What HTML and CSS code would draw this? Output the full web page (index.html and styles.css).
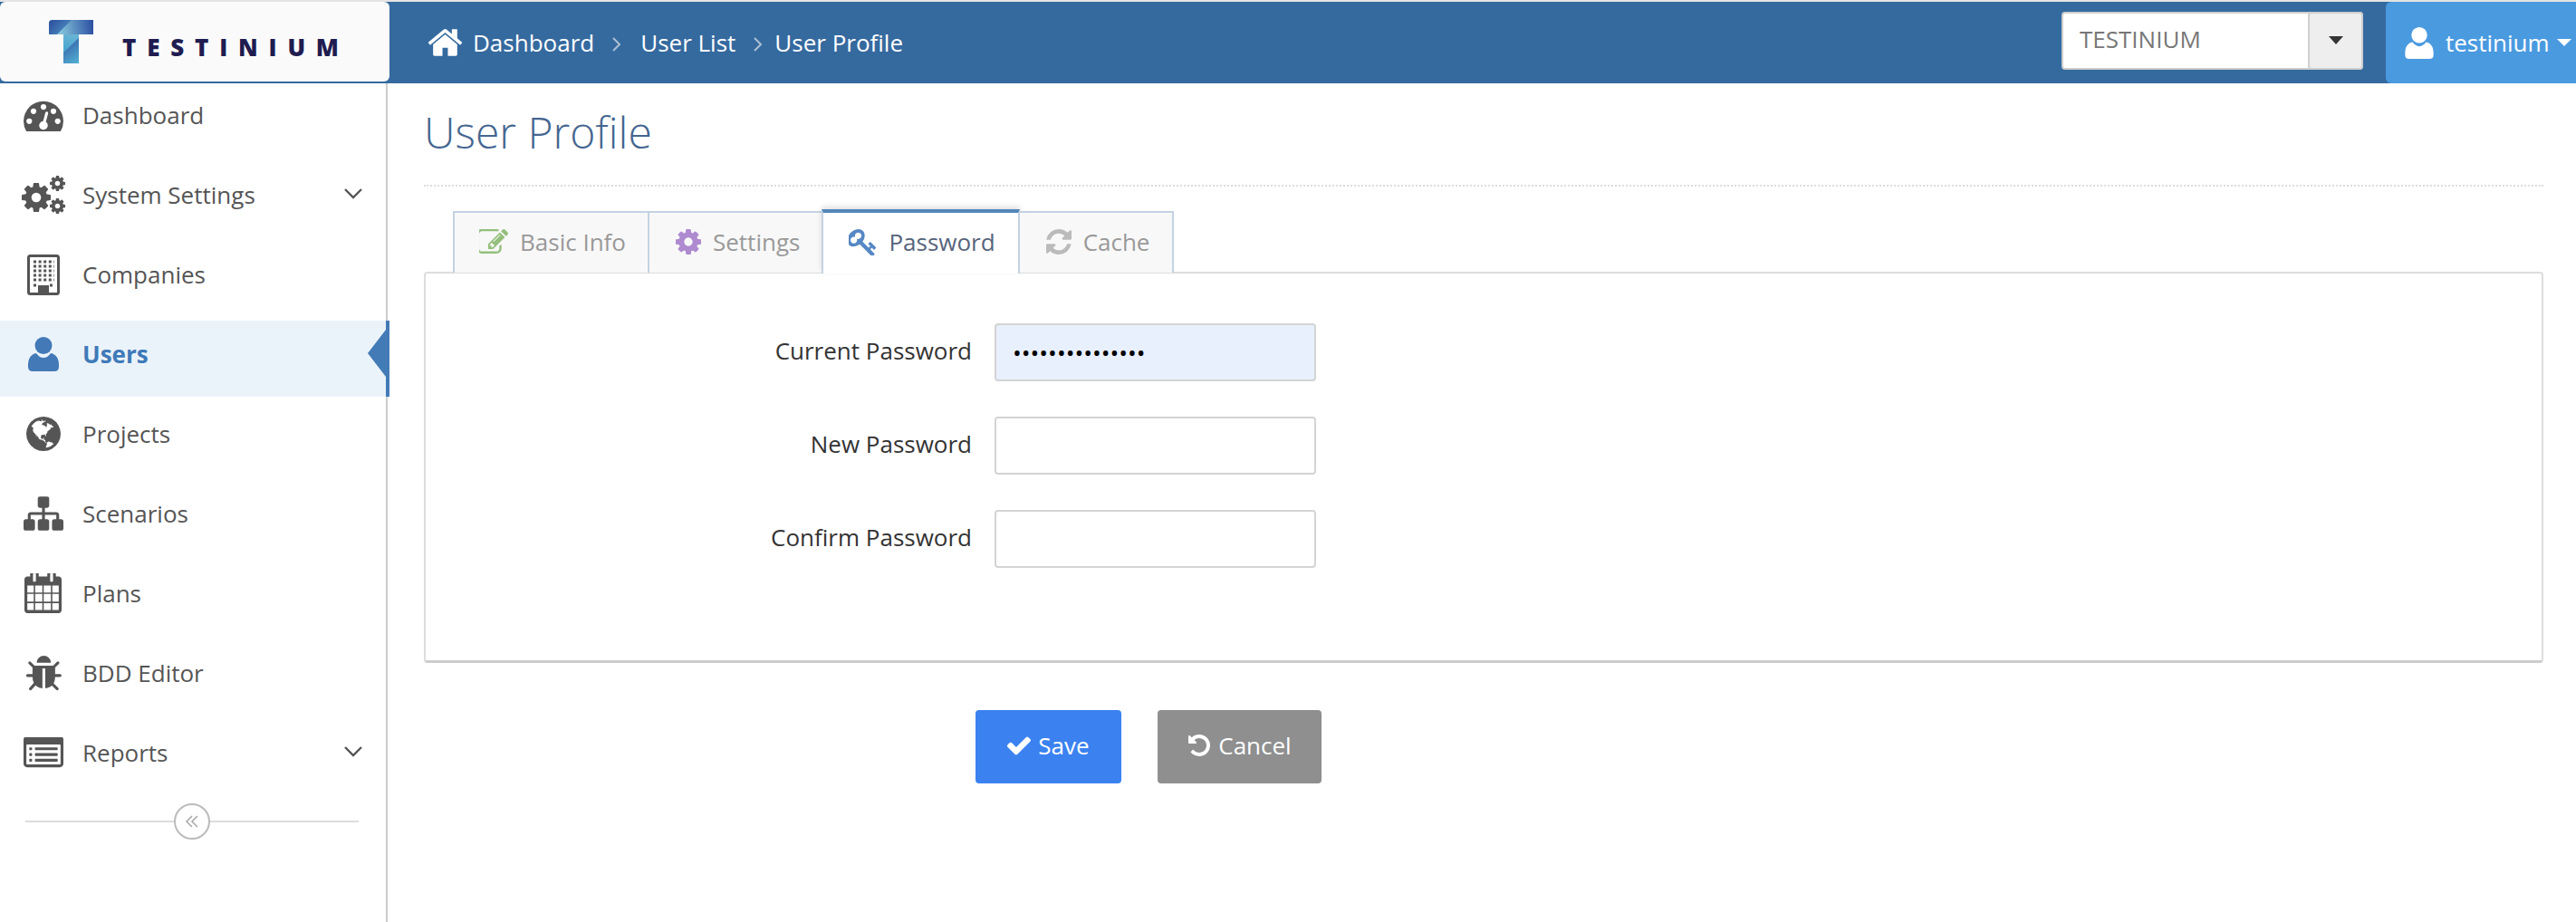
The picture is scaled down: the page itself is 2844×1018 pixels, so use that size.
FILE: index.html
```html
<!DOCTYPE html>
<html lang="en">
<head>
<meta charset="utf-8">
<title>User Profile</title>
<link rel="stylesheet" href="styles.css">
</head>
<body>
<svg class="defs" width="0" height="0" aria-hidden="true">
  <defs>
    <symbol id="i-cog" viewBox="128 128 1536 1536"><path d="M1152 896q0-106-75-181t-181-75-181 75-75 181 75 181 181 75 181-75 75-181zm512-109v222q0 12-8 23t-20 13l-185 28q-19 54-39 91 35 50 107 138 10 12 10 25t-9 23q-27 37-99 108t-94 71q-12 0-26-9l-138-108q-44 23-91 38-16 136-29 186-7 28-36 28h-222q-14 0-24.5-8.5t-11.5-21.5l-28-184q-49-16-90-37l-141 107q-10 9-25 9-14 0-25-11-126-114-165-168-7-10-7-23 0-12 8-23 15-21 51-66.5t54-70.5q-27-50-41-99l-183-27q-13-2-21-12.5t-8-23.5v-222q0-12 8-23t19-13l186-28q14-46 39-92-40-57-107-138-10-12-10-24 0-10 9-23 26-36 98.5-107.5t94.5-71.5q13 0 26 10l138 107q44-23 91-38 16-136 29-186 7-28 36-28h222q14 0 24.5 8.5t11.5 21.5l28 184q49 16 90 37l142-107q9-9 24-9 13 0 25 10 129 119 165 170 7 8 7 22 0 12-8 23-15 21-51 66.5t-54 70.5q26 50 41 98l183 28q13 2 21 12.5t8 23.5z"/></symbol>
    <symbol id="i-user" viewBox="0 0 34 38"><circle cx="17" cy="9.5" r="9.5"/><path d="M0 31C0 24 3 19 9 18C11 21 14 23 17 23C20 23 23 21 25 18C31 19 34 24 34 31V33Q34 38 29 38H5Q0 38 0 33Z"/></symbol>
    <linearGradient id="lg-a" x1="0" y1="0" x2="1" y2="0.6"><stop offset="0" stop-color="#2b4b9b"/><stop offset="1" stop-color="#4c8fc2"/></linearGradient>
    <linearGradient id="lg-b" gradientUnits="userSpaceOnUse" x1="12" y1="10" x2="48" y2="4"><stop offset="0" stop-color="#83c3da"/><stop offset="1" stop-color="#2e52a3"/></linearGradient>
    <linearGradient id="lg-b2" gradientUnits="userSpaceOnUse" x1="24" y1="12" x2="20" y2="32"><stop offset="0" stop-color="#6fb6d6"/><stop offset="1" stop-color="#4aa8cf"/></linearGradient>
    <linearGradient id="lg-c" gradientUnits="userSpaceOnUse" x1="18" y1="26" x2="34" y2="48"><stop offset="0" stop-color="#3967ab"/><stop offset="1" stop-color="#53b4d6"/></linearGradient>
    <clipPath id="t-clip"><path d="M0 4Q0 0 4 0H49V16H33V48H16V16H0Z"/></clipPath>
  </defs>
</svg>
<div class="app">
  <header class="topbar">
    <div class="brand">
      <svg class="brand-mark" viewBox="0 0 49 48" width="49" height="48" aria-hidden="true">
        <g clip-path="url(#t-clip)">
          <rect width="49" height="48" fill="url(#lg-b)"/>
          <polygon points="9,16 33,16 33,20 16,36 16,16" fill="url(#lg-b2)"/>
          <polygon points="0,0 25,0 9,16 0,16" fill="url(#lg-a)"/>
          <polygon points="33,20 33,48 16,48 16,36" fill="url(#lg-c)"/>
        </g>
      </svg>
      <span class="brand-name">TESTINIUM</span>
    </div>
    <nav class="crumbs">
      <svg class="crumb-home" viewBox="97 262 1600 1274" aria-hidden="true"><path d="M1472 992v480q0 26-19 45t-45 19h-384v-384h-256v384h-384q-26 0-45-19t-19-45v-480q0-1 .5-3t.5-3l575-474 575 474q1 2 1 6zm223-69l-62 74q-8 9-21 11h-3q-13 0-21-7l-692-577-692 577q-12 8-24 7-13-2-21-11l-62-74q-8-10-7-23.5t11-21.5l719-599q32-26 76-26t76 26l244 204v-195q0-14 9-23t23-9h192q14 0 23 9t9 23v408l219 182q10 8 11 21.5t-7 23.5z"/></svg>
      <a class="crumb">Dashboard</a>
      <svg class="crumb-sep" viewBox="0 0 11 16" aria-hidden="true"><path d="M2 1l7 7-7 7"/></svg>
      <a class="crumb">User List</a>
      <svg class="crumb-sep crumb-sep-tight" viewBox="0 0 11 16" aria-hidden="true"><path d="M2 1l7 7-7 7"/></svg>
      <a class="crumb">User Profile</a>
    </nav>
    <div class="company-select">
      <span class="company-value">TESTINIUM</span>
      <span class="company-btn"><i class="caret caret-dark"></i></span>
    </div>
    <div class="user-menu">
      <svg class="user-icon" aria-hidden="true"><use href="#i-user"/></svg>
      <span>testinium</span>
      <i class="caret caret-light"></i>
    </div>
  </header>

  <div class="layout">
    <aside class="sidebar">
      <ul class="menu">
        <li class="menu-item">
          <span class="menu-icon"><svg width="44" height="35" viewBox="0 192 1792 1408"><path d="M384 1152q0-53-37.5-90.5t-90.5-37.5-90.5 37.5-37.5 90.5 37.5 90.5 90.5 37.5 90.5-37.5 37.5-90.5zm192-448q0-53-37.5-90.5t-90.5-37.5-90.5 37.5-37.5 90.5 37.5 90.5 90.5 37.5 90.5-37.5 37.5-90.5zm428 481l101-382q6-26-7.5-48.5t-38.5-29.5-48 6.5-30 39.5l-101 382q-60 5-107 43.5t-63 98.5q-20 77 20 146t117 89 146-20 89-117q16-60-6-117t-72-91zm660-33q0-53-37.5-90.5t-90.5-37.5-90.5 37.5-37.5 90.5 37.5 90.5 90.5 37.5 90.5-37.5 37.5-90.5zm-640-640q0-53-37.5-90.5t-90.5-37.5-90.5 37.5-37.5 90.5 37.5 90.5 90.5 37.5 90.5-37.5 37.5-90.5zm448 192q0-53-37.5-90.5t-90.5-37.5-90.5 37.5-37.5 90.5 37.5 90.5 90.5 37.5 90.5-37.5 37.5-90.5zm320 448q0 261-141 483-19 29-54 29h-1402q-35 0-54-29-141-221-141-483 0-182 71-348t191-286 286-191 348-71 348 71 286 191 191 286 71 348z"/></svg></span>
          <span>Dashboard</span>
        </li>
        <li class="menu-item">
          <span class="menu-icon"><svg width="48" height="42" viewBox="0 0 48 42"><use href="#i-cog" x="0" y="8" width="32" height="32"/><use href="#i-cog" x="31" y="0" width="17" height="17"/><use href="#i-cog" x="31" y="25" width="17" height="17"/></svg></span>
          <span>System Settings</span>
          <svg class="chevron" viewBox="0 0 20 12" aria-hidden="true"><path d="M1 1l9 9 9-9"/></svg>
        </li>
        <li class="menu-item">
          <span class="menu-icon"><svg width="36" height="45" viewBox="0 0 36 45"><rect x="1.5" y="1.5" width="33" height="42" rx="2" class="building-frame"/><path d="M7 8H30M7 13H30M7 18H30M7 23H30M7 28H30" class="building-dots"/><path d="M7 34H11M25 34H30" class="building-dots"/><rect x="12" y="34" width="12" height="9"/></svg></span>
          <span>Companies</span>
        </li>
        <li class="menu-item is-active">
          <span class="menu-icon"><svg width="34" height="38"><use href="#i-user"/></svg></span>
          <span>Users</span>
          <i class="active-arrow"></i>
        </li>
        <li class="menu-item">
          <span class="menu-icon"><svg width="38" height="38" viewBox="128 128 1536 1536"><path d="M896 128q209 0 385.5 103t279.5 279.5 103 385.5-103 385.5-279.5 279.5-385.5 103-385.5-103-279.5-279.5-103-385.5 103-385.5 279.5-279.5 385.5-103zm274 521q-2 1-9.5 9.5t-13.5 9.5q2 0 4.5-5t5-11 3.5-7q6-7 22-15 14-6 52-12 34-8 51 11-2-2 9.5-13t14.5-12q3-2 15-4.5t15-7.5l2-22q-12 1-17.5-7t-6.5-21q0 2-6 8 0-7-4.5-8t-11.5 1-9 1q-10-3-15-7.5t-8-16.5-4-15q-2-5-9.5-11t-9.5-10q-1-2-2.5-5.5t-3-6.5-4-5.5-5.5-2.5-7 5-7.5 10-4.5 5q-3-2-6-1.5t-4.5 1-4.5 3-5 3.5q-3 2-8.5 3t-8.5 2q15-5-1-11-10-4-16-3 9-4 7.5-12t-8.5-14h5q-1-4-8.5-8.5t-17.5-8.5-13-6q-8-5-34-9.5t-33-.5q-5 6-4.5 10.5t4 14 3.5 12.5q1 6-5.5 13t-6.5 12q0 7 14 15.5t10 21.5q-3 8-16 16t-16 12q-5 8-1.5 18.5t10.5 16.5q2 2 1.5 4t-3.5 4.5-5.5 4-6.5 3.5l-3 2q-11 5-20.5-6t-13.5-26q-7-25-16-30-23-8-29 1-5-13-41-26-25-9-58-4 6-1 0-15-7-15-19-12 3-6 4-17.5t1-13.5q3-13 12-23 1-1 7-8.5t9.5-13.5.5-6q35 4 50-11 5-5 11.5-17t10.5-17q9-6 14-5.5t14.5 5.5 14.5 5q14 1 15.5-11t-7.5-20q12 1 3-17-4-7-8-9-12-4-27 5-8 4 2 8-1-1-9.5 10.5t-16.5 17.5-14-13q-1-1-5.5-13.5t-9.5-13.5q-8 0-16 15 3-8-11-15t-24-8q19-12-8-27-7-4-20.5-5t-19.5 4q-5 7-5.5 11.5t5 8 10.5 5.5 11.5 4 8.5 3q14 10 8 14-2 1-8.5 3.5t-11.5 4.5-6 4q-3 4 0 14t-2 14q-5-5-9-17.5t-7-16.5q7 9-25 6l-10-1q-4 0-16 2t-20.5 1-13.5-8q-4-8 0-20 1-4 4-2-4-3-11-9.5t-10-8.5q-46 15-94 41 6 1 12-1 5-2 13-6.5t10-5.5q34-14 42-7l5-5q14 16 20 25-7-4-30-1-20 6-22 12 7 12 5 18-4-3-11.5-10t-14.5-11-15-5q-16 0-22 1-146 80-235 222 7 7 12 8 4 1 5 9t2.5 11 11.5-3q9 8 3 19 1-1 44 27 19 17 21 21 3 11-10 18-1-2-9-9t-9-4q-3 5 .5 18.5t10.5 12.5q-7 0-9.5 16t-2.5 35.5-1 23.5l2 1q-3 12 5.5 34.5t21.5 19.5q-13 3 20 43 6 8 8 9 3 2 12 7.5t15 10 10 10.5q4 5 10 22.5t14 23.5q-2 6 9.5 20t10.5 23q-1 0-2.5 1t-2.5 1q3 7 15.5 14t15.5 13q1 3 2 10t3 11 8 2q2-20-24-62-15-25-17-29-3-5-5.5-15.5t-4.5-14.5q2 0 6 1.5t8.5 3.5 7.5 4 2 3q-3 7 2 17.5t12 18.5 17 19 12 13q6 6 14 19.5t0 13.5q9 0 20 10.5t17 19.5q5 8 8 26t5 24q2 7 8.5 13.5t12.5 9.5l16 8 13 7q5 2 18.5 10.5t21.5 11.5q10 4 16 4t14.5-2.5 13.5-3.5q15-2 29 15t21 21q36 19 55 11-2 1 .5 7.5t8 15.5 9 14.5 5.5 8.5q5 6 18 15t18 15q6-4 7-9-3 8 7 20t18 10q14-3 14-32-31 15-49-18 0-1-2.5-5.5t-4-8.5-2.5-8.5 0-7.5 5-3q9 0 10-3.5t-2-12.5-4-13q-1-8-11-20t-12-15q-5 9-16 8t-16-9q0 1-1.5 5.5t-1.5 6.5q-13 0-15-1 1-3 2.5-17.5t3.5-22.5q1-4 5.5-12t7.5-14.5 4-12.5-4.5-9.5-17.5-2.5q-19 1-26 20-1 3-3 10.5t-5 11.5-9 7q-7 3-24 2t-24-5q-13-8-22.5-29t-9.5-37q0-10 2.5-26.5t3-25-5.5-24.5q3-2 9-9.5t10-10.5q2-1 4.5-1.5t4.5 0 4-1.5 3-6q-1-1-4-3-3-3-4-3 7 3 28.5-1.5t27.5 1.5q15 11 22-2 0-1-2.5-9.5t-.5-13.5q5 27 29 9 3 3 15.5 5t17.5 5q3 2 7 5.5t5.5 4.5 5-.5 8.5-6.5q10 14 12 24 11 40 19 44 7 3 11 2t4.5-9.5 0-14-1.5-12.5l-1-8v-18l-1-8q-15-3-18.5-12t1.5-18.5 15-18.5q1-1 8-3.5t15.5-6.5 12.5-8q21-19 15-35 7 0 11-9-1 0-5-3t-7.5-5-4.5-2q9-5 2-16 5-3 7.5-11t7.5-10q9 12 21 2 8-8 1-16 5-7 20.5-10.5t18.5-9.5q7 2 8-2t1-12 3-12q4-5 15-9t13-5l17-11q3-4 0-4 18 2 31-11 10-11-6-20 3-6-3-9.5t-15-5.5q3-1 11.5-.5t10.5-1.5q15-10-7-16-17-5-43 12zm-163 877q206-36 351-189-3-3-12.5-4.5t-12.5-3.5q-18-7-24-8 1-7-2.5-13t-8-9-12.5-8-11-7q-2-2-7-6t-7-5.5-7.5-4.5-8.5-2-10 1l-3 1q-3 1-5.5 2.5t-5.5 3-4 3 0 2.5q-21-17-36-22-5-1-11-5.5t-10.5-7-10-1.5-11.5 7q-5 5-6 15t-2 13q-7-5 0-17.5t2-18.5q-3-6-10.5-4.5t-12 4.5-11.5 8.5-9 6.5-8.5 5.5-8.5 7.5q-3 4-6 12t-5 11q-2-4-11.5-6.5t-9.5-5.5q2 10 4 35t5 38q7 31-12 48-27 25-29 40-4 22 12 26 0 7-8 20.5t-7 21.5q0 6 2 16z"/></svg></span>
          <span>Projects</span>
        </li>
        <li class="menu-item">
          <span class="menu-icon"><svg width="44" height="38" viewBox="0 128 1792 1536"><path d="M1792 1248v320q0 40-28 68t-68 28h-320q-40 0-68-28t-28-68v-320q0-40 28-68t68-28h96v-192h-512v192h96q40 0 68 28t28 68v320q0 40-28 68t-68 28h-320q-40 0-68-28t-28-68v-320q0-40 28-68t68-28h96v-192h-512v192h96q40 0 68 28t28 68v320q0 40-28 68t-68 28h-320q-40 0-68-28t-28-68v-320q0-40 28-68t68-28h96v-192q0-52 38-90t90-38h512v-192h-96q-40 0-68-28t-28-68v-320q0-40 28-68t68-28h320q40 0 68 28t28 68v320q0 40-28 68t-68 28h-96v192h512q52 0 90 38t38 90v192h96q40 0 68 28t28 68z"/></svg></span>
          <span>Scenarios</span>
        </li>
        <li class="menu-item">
          <span class="menu-icon"><svg width="41" height="44" viewBox="64 128 1664 1664" preserveAspectRatio="none"><path d="M192 1664h288v-288h-288v288zm352 0h320v-288h-320v288zm-352-352h288v-320h-288v320zm352 0h320v-320h-320v320zm-352-384h288v-288h-288v288zm736 736h320v-288h-320v288zm-384-736h320v-288h-320v288zm768 736h288v-288h-288v288zm-384-352h320v-320h-320v320zm-352-864v-288q0-13-9.5-22.5t-22.5-9.5h-64q-13 0-22.5 9.5t-9.5 22.5v288q0 13 9.5 22.5t22.5 9.5h64q13 0 22.5-9.5t9.5-22.5zm736 864h288v-320h-288v320zm-384-384h320v-288h-320v288zm384 0h288v-288h-288v288zm32-480v-288q0-13-9.5-22.5t-22.5-9.5h-64q-13 0-22.5 9.5t-9.5 22.5v288q0 13 9.5 22.5t22.5 9.5h64q13 0 22.5-9.5t9.5-22.5zm384-64v1280q0 52-38 90t-90 38h-1408q-52 0-90-38t-38-90v-1280q0-52 38-90t90-38h128v-96q0-66 47-113t113-47h64q66 0 113 47t47 113v96h384v-96q0-66 47-113t113-47h64q66 0 113 47t47 113v96h128q52 0 90 38t38 90z"/></svg></span>
          <span>Plans</span>
        </li>
        <li class="menu-item">
          <span class="menu-icon"><svg width="40" height="39" viewBox="64 64 1632 1600"><path d="M1696 960q0 26-19 45t-45 19h-224q0 171-67 290l208 209q19 19 19 45t-19 45q-18 19-45 19t-45-19l-198-197q-5 5-15 13t-42 28.5-65 36.5-82 29-97 13v-896h-128v896q-51 0-101.5-13.5t-87-33-66-39-43.5-32.5l-15-14-183 207q-20 21-48 21-24 0-43-16-19-18-20.5-44.5t15.5-46.5l202-227q-58-114-58-274h-224q-26 0-45-19t-19-45 19-45 45-19h224v-294l-173-173q-19-19-19-45t19-45 45-19 45 19l173 173h844l173-173q19-19 45-19t45 19 19 45-19 45l-173 173v294h224q26 0 45 19t19 45zm-480-576h-640q0-133 93.5-226.5t226.5-93.5 226.5 93.5 93.5 226.5z"/></svg></span>
          <span>BDD Editor</span>
        </li>
        <li class="menu-item">
          <span class="menu-icon"><svg width="44" height="35" viewBox="0 192 1792 1408"><path d="M384 1184v64q0 13-9.5 22.5t-22.5 9.5h-64q-13 0-22.5-9.5t-9.5-22.5v-64q0-13 9.5-22.5t22.5-9.5h64q13 0 22.5 9.5t9.5 22.5zm0-256v64q0 13-9.5 22.5t-22.5 9.5h-64q-13 0-22.5-9.5t-9.5-22.5v-64q0-13 9.5-22.5t22.5-9.5h64q13 0 22.5 9.5t9.5 22.5zm0-256v64q0 13-9.5 22.5t-22.5 9.5h-64q-13 0-22.5-9.5t-9.5-22.5v-64q0-13 9.5-22.5t22.5-9.5h64q13 0 22.5 9.5t9.5 22.5zm1152 512v64q0 13-9.5 22.5t-22.5 9.5h-960q-13 0-22.5-9.5t-9.5-22.5v-64q0-13 9.5-22.5t22.5-9.5h960q13 0 22.5 9.5t9.5 22.5zm0-256v64q0 13-9.5 22.5t-22.5 9.5h-960q-13 0-22.5-9.5t-9.5-22.5v-64q0-13 9.5-22.5t22.5-9.5h960q13 0 22.5 9.5t9.5 22.5zm0-256v64q0 13-9.5 22.5t-22.5 9.5h-960q-13 0-22.5-9.5t-9.5-22.5v-64q0-13 9.5-22.5t22.5-9.5h960q13 0 22.5 9.5t9.5 22.5zm128 704v-832q0-13-9.5-22.5t-22.5-9.5h-1472q-13 0-22.5 9.5t-9.5 22.5v832q0 13 9.5 22.5t22.5 9.5h1472q13 0 22.5-9.5t9.5-22.5zm128-1088v1088q0 66-47 113t-113 47h-1472q-66 0-113-47t-47-113v-1088q0-66 47-113t113-47h1472q66 0 113 47t47 113z"/></svg></span>
          <span>Reports</span>
          <svg class="chevron" viewBox="0 0 20 12" aria-hidden="true"><path d="M1 1l9 9 9-9"/></svg>
        </li>
      </ul>
      <div class="collapse-row">
        <button class="collapse-btn" type="button" aria-label="Collapse"><svg viewBox="0 0 16 14"><path d="M8 1L2 7l6 6M14 1L8 7l6 6"/></svg></button>
      </div>
    </aside>

    <main class="content">
      <h1 class="page-title">User Profile</h1>
      <ul class="tabs">
        <li class="tab tab-basic"><svg class="tab-icon icon-pencil" viewBox="128 136 1656 1400"><path d="M888 1184l116-116-152-152-116 116v56h96v96h56zm440-720q-16-16-33 1l-350 350q-17 17-1 33t33-1l350-350q17-17 1-33zm80 594v190q0 119-84.5 203.5t-203.5 84.5h-832q-119 0-203.5-84.5t-84.5-203.5v-832q0-119 84.5-203.5t203.5-84.5h832q63 0 117 25 15 7 18 23 3 17-9 29l-49 49q-14 14-32 8-23-6-45-6h-832q-66 0-113 47t-47 113v832q0 66 47 113t113 47h832q66 0 113-47t47-113v-126q0-13 9-22l64-64q15-15 35-7t20 29zm-96-738l288 288-672 672h-288v-288zm444 132l-92 92-288-288 92-92q28-28 68-28t68 28l152 152q28 28 28 68t-28 68z"/></svg><span>Basic Info</span></li>
        <li class="tab tab-settings"><svg class="tab-icon icon-cog"><use href="#i-cog"/></svg><span>Settings</span></li>
        <li class="tab is-active"><svg class="tab-icon icon-key" viewBox="128 128 1555 1536"><path d="M832 512q0-80-56-136t-136-56-136 56-56 136q0 42 19 83-41-19-83-19-80 0-136 56t-56 136 56 136 136 56 136-56 56-136q0-42-19-83 41 19 83 19 80 0 136-56t56-136zm851 704q0 17-49 66t-66 49q-9 0-28.5-16t-36.5-33-38.5-40-24.5-26l-96 96 220 220q28 28 28 68 0 42-39 81t-81 39q-40 0-68-28l-671-671q-176 131-365 131-163 0-265.5-102.5t-102.5-265.5q0-160 95-313t248-248 313-95q163 0 265.5 102.5t102.5 265.5q0 189-131 365l355 355 96-96q-3-3-26-24.5t-40-38.5-33-36.5-16-28.5q0-17 49-66t66-49q13 0 23 10 6 6 46 44.5t82 79.5 86.5 86 73 78 28.5 41z"/></svg><span>Password</span></li>
        <li class="tab tab-cache"><svg class="tab-icon icon-refresh" viewBox="128 128 1536 1536"><path d="M1639 1056q0 5-1 7-64 268-268 434.5t-478 166.5q-146 0-282.5-55t-243.5-157l-129 129q-19 19-45 19t-45-19-19-45v-448q0-26 19-45t45-19h448q26 0 45 19t19 45-19 45l-137 137q71 66 161 102t187 36q134 0 250-65t186-179q11-17 53-117 8-23 30-23h192q13 0 22.5 9.5t9.5 22.5zm25-800v448q0 26-19 45t-45 19h-448q-26 0-45-19t-19-45 19-45l138-138q-148-137-349-137-134 0-250 65t-186 179q-11 17-53 117-8 23-30 23h-199q-13 0-22.5-9.5t-9.5-22.5v-7q65-268 270-434.5t480-166.5q146 0 284 55.5t245 156.5l130-129q19-19 45-19t45 19 19 45z"/></svg><span>Cache</span></li>
      </ul>
      <form class="panel">
        <label class="field-label" for="cur">Current Password</label>
        <input class="field-input is-filled" id="cur" type="password" value="aaaaaaaaaaaaaaa">
        <label class="field-label" for="new">New Password</label>
        <input class="field-input" id="new" type="password">
        <label class="field-label" for="conf">Confirm Password</label>
        <input class="field-input" id="conf" type="password">
      </form>
      <div class="actions">
        <button class="btn btn-save" type="button"><svg class="btn-icon" viewBox="128 256 1543 1280"><path d="M1671 566q0 40-28 68l-724 724-136 136q-28 28-68 28t-68-28l-136-136-362-362q-28-28-28-68t28-68l136-136q28-28 68-28t68 28l294 295 656-657q28-28 68-28t68 28l136 136q28 28 28 68z"/></svg>Save</button>
        <button class="btn btn-cancel" type="button"><svg class="btn-icon" viewBox="128 128 1536 1536"><path d="M1664 896q0 156-61 298t-164 245-245 164-298 61q-172 0-327-72.5t-264-204.5q-7-10-6.5-22.5t8.5-20.5l137-138q10-9 25-9 16 2 23 12 73 95 179 147t225 52q104 0 198.5-40.5t163.5-109.5 109.5-163.5 40.5-198.5-40.5-198.5-109.5-163.5-163.5-109.5-198.5-40.5q-98 0-188 35.5t-160 101.5l137 138q31 30 14 69-17 40-59 40h-448q-26 0-45-19t-19-45v-448q0-42 40-59 39-17 69 14l130 129q107-101 244.5-156.5t284.5-55.5q156 0 298 61t245 164 164 245 61 298z"/></svg>Cancel</button>
      </div>
    </main>
  </div>
</div>
</body>
</html>
```

FILE: styles.css
```css
* { box-sizing: border-box; }
html, body { margin: 0; padding: 0; height: 100%; }
body {
  font-family: "Open Sans", "Noto Sans", sans-serif;
  font-size: 26px;
  color: #555;
  background: #fff;
  overflow: hidden;
}
.defs { position: absolute; }
ul { list-style: none; margin: 0; padding: 0; }

.app {
  width: 2844px;
  height: 1018px;
  display: flex;
  flex-direction: column;
  border-top: 2px solid #e4e4e4;
}

/* top bar */
.topbar {
  height: 90px;
  flex: none;
  display: flex;
  align-items: center;
  background: #356a9f;
  position: relative;
  z-index: 2;
}
.brand {
  width: 430px;
  height: 88px;
  align-self: flex-start;
  display: flex;
  align-items: flex-start;
  padding: 20px 0 0 54px;
  background: #fafafa;
  border-radius: 6px;
}
.brand-mark { flex: none; }
.brand-name {
  margin: 12px 0 0 32px;
  font-size: 26px;
  line-height: 36px;
  font-weight: 800;
  letter-spacing: 11.8px;
  color: #1f1c50;
}
.crumbs {
  flex: 1;
  display: flex;
  align-items: center;
  padding-left: 43px;
  color: #fff;
}
.crumb-home { width: 37px; height: 30px; fill: #fff; margin-right: 12px; }
.crumb-sep { width: 11px; height: 16px; margin: 4px 21px 0 19px; fill: none; stroke: #aebfd2; stroke-width: 2; }
.crumb-sep-tight { margin-right: 13px; }
.company-select {
  width: 333px;
  height: 64px;
  margin-top: -4px;
  display: flex;
  background: #fff;
  border: 2px solid #cfcfcf;
  border-radius: 4px;
}
.company-value {
  flex: 1;
  padding-left: 18px;
  line-height: 56px;
  font-size: 26px;
  color: #777;
}
.company-btn {
  width: 61px;
  margin: -2px -2px -2px 0;
  display: flex;
  align-items: center;
  justify-content: center;
  background: #eee;
  border: 2px solid #cfcfcf;
  border-radius: 4px;
}
.caret { display: block; width: 0; height: 0; border-style: solid; border-color: transparent; }
.caret-dark { border-width: 9px 8px 0; border-top-color: #333; margin-top: -2px; }
.caret-light { border-width: 8px 8px 0; border-top-color: #fff; margin-left: 8px; }
.user-menu {
  width: 210px;
  height: 90px;
  margin-left: 25px;
  display: flex;
  align-items: center;
  padding-left: 21px;
  background: #4a9ae0;
  border-radius: 6px 0 0 6px;
  color: #fff;
}
.user-icon { width: 32px; height: 35px; fill: #fff; margin-right: 13px; }

/* layout */
.layout { flex: 1; min-height: 0; display: flex; }
.sidebar {
  width: 428px;
  flex: none;
  border-right: 2px solid #ccc;
  background: #fff;
}
.menu { margin-top: -5px; }
.menu-item {
  position: relative;
  height: 88px;
  padding-bottom: 8px;
  display: flex;
  align-items: center;
}
.menu-icon {
  width: 91px;
  flex: none;
  padding-left: 4px;
  display: flex;
  justify-content: center;
  fill: #555;
}
.building-frame { fill: none; stroke: #555; stroke-width: 3; }
.building-dots { fill: none; stroke: #555; stroke-width: 3; stroke-dasharray: 3 2.6; }
.chevron {
  position: absolute;
  left: 380px;
  top: 33px;
  width: 20px;
  height: 12px;
  fill: none;
  stroke: #555;
  stroke-width: 2.4;
}
.menu-item.is-active {
  padding-bottom: 10px;
  background: #ebf3fa padding-box;
  border-top: 3px solid transparent;
  border-bottom: 1px solid transparent;
  color: #3f7ab8;
  font-weight: 700;
}
.is-active .menu-icon { fill: #4379b6; }
.active-arrow {
  position: absolute;
  right: -4px;
  top: 0;
  bottom: 0;
  width: 24px;
  background: linear-gradient(#437bb7, #437bb7) right / 4px 100% no-repeat;
}
.active-arrow::before {
  content: "";
  position: absolute;
  left: 0;
  top: 10px;
  border-style: solid;
  border-width: 26px 20px 26px 0;
  border-color: transparent #437bb7 transparent transparent;
}
.collapse-row {
  margin: 27px 30px 0 28px;
  height: 2px;
  background: #ddd;
  display: flex;
  align-items: center;
  justify-content: center;
}
.collapse-btn {
  width: 40px;
  height: 40px;
  flex: none;
  padding: 0;
  display: flex;
  align-items: center;
  justify-content: center;
  background: #fff;
  border: 2px solid #bbb;
  border-radius: 50%;
}
.collapse-btn svg { width: 16px; height: 14px; fill: none; stroke: #aaa; stroke-width: 1.6; }

/* content */
.content { flex: 1; min-width: 0; padding: 0 36px 0 40px; }
.page-title {
  height: 114px;
  margin: 0 0 26px;
  padding: 22px 0 0 0;
  border-bottom: 2px dotted #ddd;
  font-size: 48px;
  line-height: 64px;
  font-weight: 300;
  color: #456690;
}
.tabs {
  display: flex;
  height: 69px;
  margin: 0 0 -1px 32px;
  position: relative;
  z-index: 1;
}
.tab {
  display: flex;
  align-items: center;
  height: 68px;
  margin-top: 1px;
  padding: 0 25px 3px 28px;
  gap: 13px;
  color: #999;
  background: #f8f8f8;
  border: 2px solid #c3d2e2;
  border-bottom: 0;
  border-right-width: 0;
}
.tab-basic { padding: 0 24px 3px 27px; }
.tab-settings { padding: 0 24px 3px 29px; }
.tab:last-child { border-right-width: 2px; }
.tab.is-active {
  height: 71px;
  margin-top: -1px;
  color: #56647c;
  background: #fff;
  border-top: 4px solid #5487ba;
  border-right-width: 2px;
  box-shadow: 0 -3px 6px rgba(0, 0, 0, .12);
}
.tab.is-active + .tab { border-left: 0; padding-left: 29px; }
.tab-icon { flex: none; }
.icon-pencil { width: 32px; height: 27px; fill: #94bf7c; }
.icon-cog { width: 28px; height: 28px; fill: #ae8bd0; }
.icon-key { width: 31px; height: 29px; fill: #5588c4; }
.icon-refresh { width: 28px; height: 28px; fill: #bbb; }

.panel {
  height: 432px;
  display: grid;
  grid-template-columns: 603px 355px;
  column-gap: 25px;
  row-gap: 39px;
  align-content: start;
  align-items: center;
  padding-top: 55px;
  background: #fff;
  border: 2px solid #ddd;
  border-bottom: 3px solid #ccc;
  border-radius: 4px;
}
.field-label { padding-bottom: 5px; text-align: right; color: #333; font-size: 26px; }
.field-input {
  height: 64px;
  width: 100%;
  padding: 0 18px;
  font-family: "Open Sans", sans-serif;
  font-size: 26px;
  background: #fff;
  border: 2px solid #d4d4d4;
  border-radius: 4px;
  outline: none;
}
.field-input.is-filled { background: #e8f0fe; }

.actions {
  display: flex;
  gap: 40px;
  margin: 52px 0 0 609px;
}
.btn {
  height: 81px;
  padding: 0 0 3px;
  display: flex;
  align-items: center;
  justify-content: center;
  gap: 8px;
  font-family: "Open Sans", sans-serif;
  font-size: 26px;
  color: #fff;
  fill: #fff;
  border: 0;
  border-radius: 4px;
}
.btn-icon { width: 26px; height: 24px; }
.btn-save { width: 161px; background: #3b82f0; }
.btn-cancel { width: 181px; background: #8f8f8f; }
```
